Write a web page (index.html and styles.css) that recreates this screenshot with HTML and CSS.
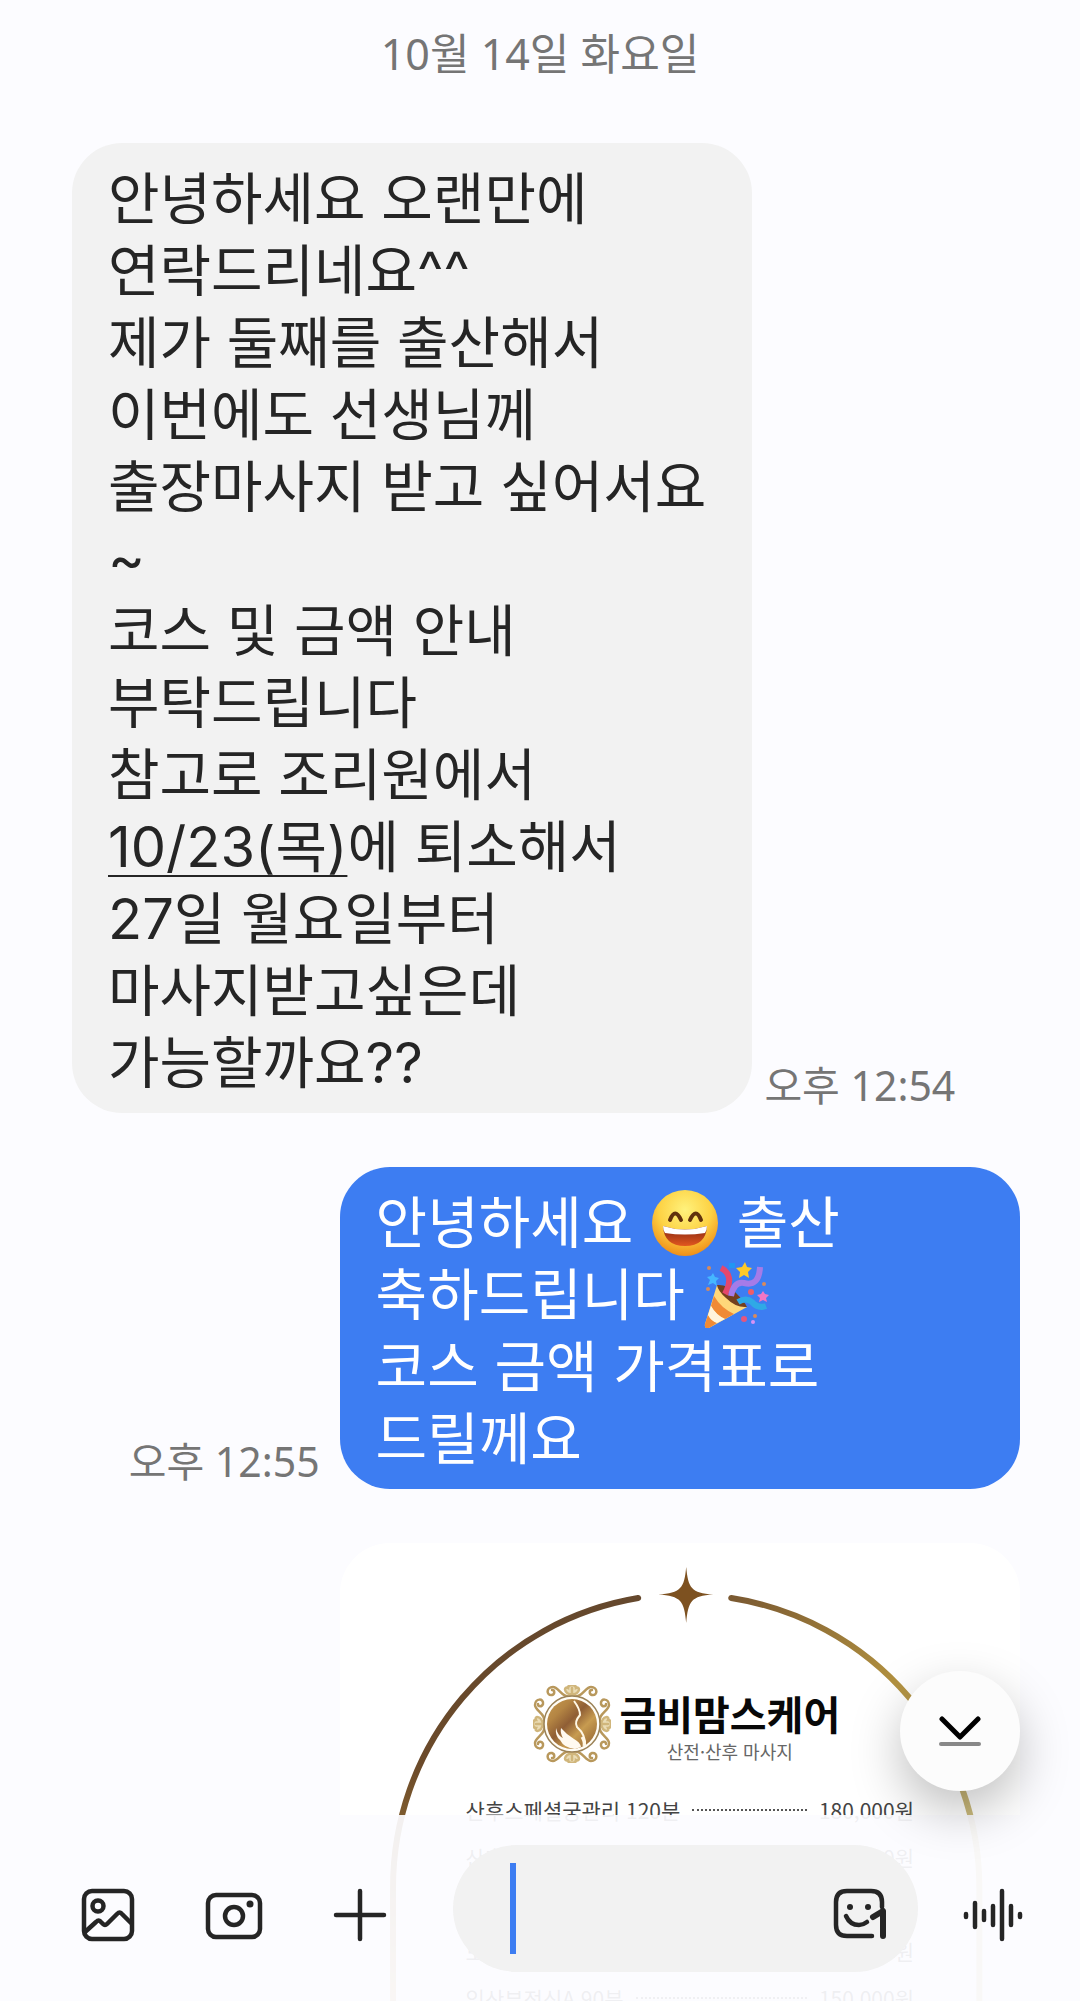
FILE: index.html
```
<!DOCTYPE html>
<html lang="ko">
<head>
  <meta charset="UTF-8">
  <meta name="viewport" content="width=device-width, initial-scale=1.0">
  <title>메시지</title>
  <link rel="stylesheet" href="styles.css">
</head>
<body>

  <main class="chat">
    <h1 class="date">10월 14일 화요일</h1>

    <!-- Received -->
    <div class="message">
      <p class="bubble">안녕하세요 오랜만에<br>연락드리네요^^<br>제가 둘째를 출산해서<br>이번에도 선생님께<br>출장마사지 받고 싶어서요<br>~<br>코스 및 금액 안내<br>부탁드립니다<br>참고로 조리원에서<br><a href="#">10/23(목)</a>에 퇴소해서<br>27일 월요일부터<br>마사지받고싶은데<br>가능할까요??</p>
      <time class="time">오후 12:54</time>
    </div>

    <!-- Sent -->
    <div class="message sent">
      <time class="time">오후 12:55</time>
      <p class="bubble">안녕하세요
        <svg class="emoji" viewBox="0 0 66 66" role="img" aria-label="웃는 얼굴">
          <defs>
            <radialGradient id="face" cx="50%" cy="30%" r="72%">
              <stop offset="0" stop-color="#fff27c"/>
              <stop offset="0.55" stop-color="#fdd244"/>
              <stop offset="1" stop-color="#ee8a16"/>
            </radialGradient>
            <linearGradient id="mouth" x1="0" y1="0" x2="0" y2="1">
              <stop offset="0" stop-color="#7d2410"/>
              <stop offset="1" stop-color="#e2571f"/>
            </linearGradient>
          </defs>
          <circle cx="33" cy="33" r="33" fill="url(#face)"/>
          <path d="M18 30q5-13 11 0M38 30q6-13 11 0" fill="none" stroke="#61310d" stroke-width="4" stroke-linecap="round"/>
          <path d="M11 36q22 7 44 0q-1 20-22 20q-21 0-22-20z" fill="url(#mouth)"/>
          <path d="M11 36q22 7 44 0q0 4-2 7q-20 3-40 0q-2-3-2-7z" fill="#fff"/>
        </svg>
        출산<br>축하드립니다
        <svg class="emoji" viewBox="0 0 66 66" role="img" aria-label="축하 폭죽">
          <path d="M14 23L2 62q-1 5 4 4L44 45Q24 42 14 23z" fill="#ffd77a"/>
          <path d="M11 34q7 12 20 18l-9 5Q13 53 8 44zM5 53q4 6 9 8l-8 5q-5 1-4-4z" fill="#f08a35"/>
          <path d="M8 44q5 9 14 13l-8 4q-6-2-9-8z" fill="#fff4dd"/>
          <path d="M14 23q10-1 19 8t11 14Q33 46 23 36 15 29 14 23z" fill="#74401e"/>
          <path d="M18 6q14 7 4 26" fill="none" stroke="#e5476c" stroke-width="6"/>
          <path d="M28 34q3-15 13-13 15 4 16-16" fill="none" stroke="#a57be8" stroke-width="6"/>
          <path d="M35 40q8-5 14 0 6 7 14 4" fill="none" stroke="#2fa9e6" stroke-width="6"/>
          <path d="M42 0l2 5 5 1-4 4 1 6-5-3-5 3 1-6-4-4 6-1z" fill="#ffc928"/>
          <path d="M10 11l2 4 4 1-3 3 1 5-4-3-5 2 2-5-3-3 4-1z" fill="#45b7ff"/>
          <path d="M60 29l2 3 4 1-3 3 1 4-4-2-4 2 1-4-3-3 4-1z" fill="#f176c5"/>
          <circle cx="6" cy="6" r="2" fill="#d98a5a"/>
          <circle cx="5" cy="27" r="2" fill="#d98a5a"/>
          <circle cx="61" cy="22" r="2" fill="#d98a5a"/>
          <circle cx="52" cy="54" r="2" fill="#d98a5a"/>
          <circle cx="48" cy="30" r="3" fill="#ef5d68"/>
          <circle cx="41" cy="57" r="3" fill="#e5567e"/>
          <circle cx="50" cy="60" r="2" fill="#d893f5"/>
          <path d="M26 1h6v5h-6z" fill="#2196f3"/>
        </svg><br>코스 금액 가격표로<br>드릴께요</p>
    </div>

    <!-- Sent price list -->
    <div class="message sent">
      <section class="flyer">
        <svg class="arch" viewBox="0 0 680 460" aria-hidden="true">
          <defs>
            <linearGradient id="left" gradientUnits="userSpaceOnUse" x1="0" y1="60" x2="0" y2="460">
              <stop offset="0" stop-color="#65482d"/>
              <stop offset="0.4" stop-color="#6b4a2a"/>
              <stop offset="0.6" stop-color="#876330"/>
              <stop offset="1" stop-color="#d5b070"/>
            </linearGradient>
            <linearGradient id="right" gradientUnits="userSpaceOnUse" x1="390" y1="60" x2="640" y2="300">
              <stop offset="0" stop-color="#7b5a32"/>
              <stop offset="0.5" stop-color="#b2913f"/>
              <stop offset="1" stop-color="#cfc289"/>
            </linearGradient>
          </defs>
          <path d="M298 55A293 293 0 0 0 53 345V470" fill="none" stroke="url(#left)" stroke-width="6" stroke-linecap="round"/>
          <path d="M391 55A293 293 0 0 1 639 345V470" fill="none" stroke="url(#right)" stroke-width="6" stroke-linecap="round"/>
          <path d="M346 24C348 45 351 50 373 51.500C351 53 348 58 346 80C344 58 341 53 318 51.500C341 50 344 45 346 24z" fill="#7d5120"/>
        </svg>

        <header class="brand">
          <svg class="brand-logo" viewBox="0 0 78 78" aria-hidden="true">
            <defs>
              <linearGradient id="gold" x1="0" y1="0" x2="1" y2="1">
                <stop offset="0" stop-color="#c79a4f"/>
                <stop offset="0.25" stop-color="#b48543"/>
                <stop offset="0.45" stop-color="#8f5e35"/>
                <stop offset="0.65" stop-color="#c79b50"/>
                <stop offset="1" stop-color="#8a5b2f"/>
              </linearGradient>
              <g id="scroll" fill="none" stroke="#b8985c" stroke-width="2.500" stroke-linecap="round">
                <path d="M39 11C29 14 26 2 20 2c-7 0-7 9-1 8 3-1 3-5 0-5M39 11C49 14 52 2 58 2c7 0 7 9 1 8-3-1-3-5 0-5"/>
                <path d="M39 10C30 8 31 1 35 3c0-4 8-4 8 0 4-2 5 5-4 7zM39 3v7" fill="#eadcb6" stroke="#d0b67c"/>
              </g>
            </defs>
            <use href="#scroll"/>
            <use href="#scroll" transform="rotate(90 39 39)"/>
            <use href="#scroll" transform="rotate(180 39 39)"/>
            <use href="#scroll" transform="rotate(270 39 39)"/>
            <circle cx="39" cy="39" r="28" fill="#fffdf6" stroke="#9b8257" stroke-width="1.500"/>
            <circle cx="39" cy="39" r="25" fill="url(#gold)"/>
            <path d="M41 16q6 8 6 14-6 7-3 12 9 8 8 19" fill="none" stroke="#fff8e6" stroke-width="2"/>
            <path d="M23 43q2 8 7 10-3-5-2-10 6 7 13 11 6 3 7 8l-6 2q-11-1-15-9-5-4-4-12z" fill="#fffaf0"/>
            <path d="M49 52q3 5 2 9" fill="none" stroke="#fff8e6" stroke-width="3"/>
          </svg>
          <div>
            <h2 class="brand-name">금비맘스케어</h2>
            <p class="brand-sub">산전·산후 마사지</p>
          </div>
        </header>

        <ul class="prices">
          <li><span>산후스페셜궁관리 120분</span><i></i><span>180,000원</span></li>
          <li><span>산후</span><i></i><span>000원</span></li>
          <li></li>
          <li><span>모</span><i></i><span>원</span></li>
          <li><span>임산부전신A 90분</span><i></i><span>150,000원</span></li>
        </ul>
      </section>
    </div>
  </main>

  <form class="composer">
    <button class="scroll-down" type="button" aria-label="맨 아래로">
      <svg width="42" height="30" viewBox="0 0 42 30" fill="none" stroke-linecap="round" stroke-linejoin="round">
        <path d="M3 3l18 18L39 3" stroke="#000" stroke-width="5"/>
        <path d="M2 28h38" stroke="#888" stroke-width="4"/>
      </svg>
    </button>

    <div class="tools">
      <button class="tool" type="button" aria-label="갤러리">
        <svg width="60" height="60" viewBox="0 0 60 60">
          <rect x="6" y="6" width="48" height="48" rx="8"/>
          <circle cx="20" cy="21" r="5.500"/>
          <path d="M7 47l11-10q3-3 5 0l2 2q2 2 4 0l10-10q3-3 5 0l9 9"/>
        </svg>
      </button>
      <button class="tool" type="button" aria-label="카메라">
        <svg width="60" height="60" viewBox="0 0 60 60">
          <rect x="4" y="10" width="52" height="42" rx="8"/>
          <circle cx="30" cy="31" r="9"/>
          <circle class="dot" cx="46" cy="19" r="3.500"/>
        </svg>
      </button>
      <button class="tool" type="button" aria-label="더보기">
        <svg width="60" height="60" viewBox="0 0 60 60">
          <path d="M6 30h48M30 6v48"/>
        </svg>
      </button>
    </div>

    <div class="field">
      <span class="caret"></span>
      <input type="text" aria-label="메시지 입력">
      <button class="tool" type="button" aria-label="이모티콘">
        <svg width="60" height="60" viewBox="0 0 60 60">
          <path d="M53 24V19Q53 8 42 8H18Q7 8 7 19V42Q7 53 18 53H43"/>
          <path d="M17 33q4 9 13 9 4 0 8-3"/>
          <path class="one" d="M44 34l10-6v25"/>
          <circle class="dot" cx="21" cy="24" r="3"/>
          <circle class="dot" cx="39" cy="24" r="3"/>
        </svg>
      </button>
    </div>

    <button class="tool" type="button" aria-label="음성 녹음">
      <svg width="60" height="60" viewBox="0 0 60 60">
        <path d="M3 29v3M12 18v24M21 26v9M30 21v19M39 6v48M48 21v19M57 29v3"/>
      </svg>
    </button>
  </form>

</body>
</html>
```
FILE: styles.css
```
* {
  box-sizing: border-box;
}

body {
  margin: 0;
  height: 100vh;
  overflow: hidden;
  background: #fcfcff;
  color: #252525;
  font-family: "Noto Sans", "Noto Sans CJK KR", sans-serif;
}

h1, h2, p, ul {
  margin: 0;
  padding: 0;
  font-weight: normal;
}

button, input {
  border: none;
  padding: 0;
  background: none;
  font: inherit;
  outline: none;
}

.chat {
  display: flex;
  flex-direction: column;
  gap: 54px;
  padding: 24px 60px 0 72px;
}

.date {
  margin-bottom: 5px;
  padding-right: 12px;
  color: #757575;
  font-size: 43px;
  line-height: 60px;
  text-align: center;
}

.message {
  display: flex;
  align-items: flex-end;
  gap: 12px;
}

.sent {
  justify-content: flex-end;
  gap: 20px;
}

.bubble {
  width: 63vw;
  padding: 20px 36px 14px;
  border-radius: 50px;
  background: #f2f2f2;
  font-family: Inter, "Noto Sans CJK KR", sans-serif;
  font-size: 56px;
  line-height: 72px;
}

.bubble a {
  color: inherit;
  text-decoration-thickness: 2px;
  text-decoration-skip-ink: none;
  text-underline-offset: 8px;
}

.sent .bubble {
  background: #3d7df2;
  color: #fff;
}

.emoji {
  display: inline-block;
  width: 66px;
  height: 66px;
  margin: -4px 3px;
  vertical-align: -9px;
}

.time {
  color: #757575;
  font-size: 41px;
  line-height: 56px;
}

/* price list */
.flyer {
  position: relative;
  width: 63vw;
  padding: 142px 106px 0 126px;
  border-radius: 50px 50px 0 0;
  background: #fff;
  font-family: "Noto Sans CJK KR", sans-serif;
}

.arch {
  position: absolute;
  top: 0;
  left: 0;
  width: 100%;
}

.brand {
  display: flex;
  justify-content: center;
  gap: 8px;
  padding-right: 6px;
  text-align: center;
}

.brand-logo {
  width: 78px;
  height: 78px;
}

.brand-name {
  color: #080808;
  font-size: 40px;
  font-weight: bold;
  line-height: 56px;
}

.brand-sub {
  color: #666;
  font-size: 18px;
  line-height: 20px;
}

.prices {
  margin-top: 23px;
  list-style: none;
  color: #444;
  font-size: 21px;
}

.prices li {
  display: flex;
  align-items: center;
  gap: 12px;
  height: 47px;
}

.prices i {
  flex: 1;
  border-top: 2px dotted #555;
}

/* bottom bar */
.composer {
  position: fixed;
  right: 0;
  bottom: 0;
  left: 0;
  display: flex;
  align-items: center;
  padding: 30px 57px 29px 78px;
  background: rgba(252, 252, 255, 0.93);
}

.tools {
  display: flex;
  gap: 66px;
  margin-right: 63px;
}

.tool {
  flex: none;
  width: 60px;
  height: 60px;
  margin-top: 12px;
}

.tool svg {
  display: block;
  fill: none;
  stroke: #252525;
  stroke-width: 4.500;
  stroke-linecap: round;
  stroke-linejoin: round;
}

.tool .dot {
  fill: #252525;
  stroke: none;
}

.tool .one {
  stroke-width: 6;
}

.field {
  display: flex;
  flex: 1;
  align-items: center;
  min-width: 0;
  height: 127px;
  margin-right: 45px;
  padding: 0 29px 0 57px;
  border-radius: 64px;
  background: #f2f2f2;
}

.field input {
  flex: 1;
  width: 0;
  height: 91px;
  font-size: 56px;
}

.field .tool {
  margin-top: 8px;
}

.caret {
  flex: none;
  width: 6px;
  height: 91px;
  background: #3d7df2;
}

.scroll-down {
  position: absolute;
  right: 60px;
  bottom: 210px;
  display: grid;
  place-items: center;
  width: 120px;
  height: 120px;
  border-radius: 50%;
  background: #fcfcfc;
  box-shadow: 0 20px 50px rgba(0, 0, 0, 0.25);
}
```
